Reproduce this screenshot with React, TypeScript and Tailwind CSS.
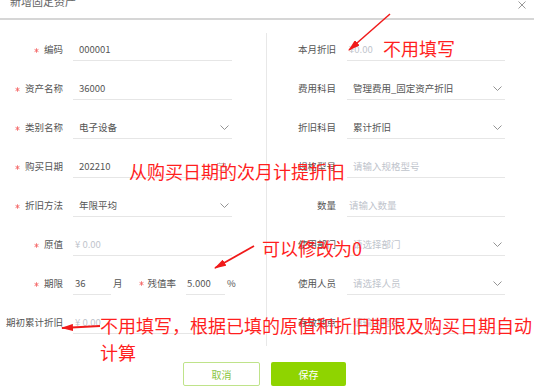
import React from 'react';

const Chevron = () => (
  <svg width="9" height="5" viewBox="0 0 9 5" className="shrink-0">
    <polyline points="0.5,0.5 4.5,4.5 8.5,0.5" fill="none" stroke="#888" strokeWidth="0.9" />
  </svg>
);

const Star = ({ className = 'mr-[5px]' }: { className?: string }) => (
  <svg width="5" height="5" viewBox="0 0 10 10" className={`inline-block align-middle ${className}`}>
    <path d="M5 0.5 V9.5 M1.1 2.75 L8.9 7.25 M8.9 2.75 L1.1 7.25" stroke="#f56c6c" strokeWidth="1.8" />
  </svg>
);

type RowProps = {
  label: string;
  req?: boolean;
  value?: string;
  placeholder?: string;
  select?: boolean;
  money?: boolean;
  right?: boolean;
  icon?: React.ReactNode;
};

const Row: React.FC<RowProps> = ({ label, req, value, placeholder, select, money, right, icon }) => (
  <div className="h-[39px] flex items-center">
    <div
      className={`${right ? 'w-[69px]' : 'w-[63px]'} text-right text-[9.5px] text-[#555] whitespace-nowrap`}
    >
      {req && <Star />}
      {label}
    </div>
    <div
      className={`${right ? 'ml-[11px] w-[158px]' : 'ml-[10px] w-[159px]'} h-[22px] border-b border-[#e6e6e6] flex items-center justify-between ${money ? 'pl-[2px]' : 'pl-[6px]'} pr-[3px] text-[9.5px]`}
    >
      {value ? (
        <span className="text-[#555]">{value}</span>
      ) : (
        <span className="text-[#c0c4cc]">{placeholder}</span>
      )}
      {select && <Chevron />}
      {icon}
    </div>
  </div>
);

const Calendar = () => (
  <svg width="9" height="9" viewBox="0 0 9 9" className="shrink-0 mr-[3px]">
    <rect x="0.5" y="1.5" width="8" height="7" fill="none" stroke="#bbb" strokeWidth="0.8" />
    <line x1="0.5" y1="3.5" x2="8.5" y2="3.5" stroke="#bbb" strokeWidth="0.8" />
    <line x1="2.5" y1="0.5" x2="2.5" y2="2" stroke="#bbb" strokeWidth="0.8" />
    <line x1="6.5" y1="0.5" x2="6.5" y2="2" stroke="#bbb" strokeWidth="0.8" />
  </svg>
);

export default function App() {
  return (
    <div className="relative w-[534px] h-[389px] overflow-hidden bg-white font-['Noto_Sans_CJK_SC',sans-serif]">
      <div className="h-[20px] border-b-2 border-[#d6d6d6] flex justify-between">
        <span className="ml-[10px] -mt-[4px] text-[11px] leading-[11px] text-[#666]">新增固定资产</span>
        <svg width="8" height="8" viewBox="0 0 8 8" className="mr-[8px] mt-[1px]">
          <path d="M0.5 0.5 L7.5 7.5 M7.5 0.5 L0.5 7.5" stroke="#999" strokeWidth="1" />
        </svg>
      </div>

      <div className="flex pt-[10px]">
        <div className="w-[266px]">
          <Row label="编码" req value="000001" />
          <Row label="资产名称" req value="36000" />
          <Row label="类别名称" req value="电子设备" select />
          <Row label="购买日期" req value="202210" icon={<Calendar />} />
          <Row label="折旧方法" req value="年限平均" select />
          <Row label="原值" req placeholder="¥ 0.00" money />
          <div className="h-[39px] flex items-center text-[9.5px] text-[#555]">
            <div className="w-[63px] text-right whitespace-nowrap">
              <Star />
              期限
            </div>
            <div className="ml-[10px] w-[38px] h-[22px] border-b border-[#e6e6e6] flex items-center pl-[2px]">36</div>
            <span className="ml-[2px]">月</span>
            <Star className="ml-[16px]" />
            <span className="ml-[4px]">残值率</span>
            <div className="ml-[10px] w-[39px] h-[22px] border-b border-[#e6e6e6] flex items-center pl-[1px]">5.000</div>
            <span className="ml-[2px]">%</span>
          </div>
          <Row label="期初累计折旧" placeholder="¥ 0.00" money />
        </div>
        <div className="w-px bg-[#e8e8e8] mt-[3px] mb-[-4px]" />
        <div className="w-[267px]">
          <Row right label="本月折旧" placeholder="¥0.00" money />
          <Row right label="费用科目" value="管理费用_固定资产折旧" select />
          <Row right label="折旧科目" value="累计折旧" select />
          <Row right label="规格型号" placeholder="请输入规格型号" />
          <Row right label="数量" placeholder="请输入数量" money />
          <Row right label="使用部门" placeholder="请选择部门" select />
          <Row right label="使用人员" placeholder="请选择人员" select />
          <Row right label="存放地点" placeholder="请输入地点" />
        </div>
      </div>

      <div className="flex justify-center gap-[11px] mt-[20px] pr-[5px]">
        <button className="w-[77px] h-[24px] rounded-[2px] border border-[#bfe38a] bg-white text-[#8cc63f] text-[10px]">
          取消
        </button>
        <button className="w-[75px] h-[24px] rounded-[2px] bg-[#8fd400] text-white text-[10px]">保存</button>
      </div>

      {/* 标注 */}
      <svg className="absolute inset-0 pointer-events-none" width="534" height="389">
        <defs>
          <marker id="ah" markerWidth="12" markerHeight="7" refX="11" refY="3.5" orient="auto" markerUnits="userSpaceOnUse">
            <polygon points="0,0 12,3.5 0,7" fill="#f01a1a" />
          </marker>
        </defs>
        <line x1="390" y1="14" x2="349" y2="50" stroke="#f01a1a" strokeWidth="1.5" markerEnd="url(#ah)" />
        <line x1="254" y1="246" x2="215" y2="268" stroke="#f01a1a" strokeWidth="1.8" markerEnd="url(#ah)" />
        <line x1="100" y1="326" x2="62" y2="328" stroke="#f01a1a" strokeWidth="1.8" markerEnd="url(#ah)" />
      </svg>
      <div className="absolute left-[383px] top-[39px] text-[18px] leading-[18px] text-[#ff1f1f] whitespace-nowrap">不用填写</div>
      <div className="absolute left-[129px] top-[162px] text-[18px] leading-[18px] text-[#ff1f1f] whitespace-nowrap">
        从购买日期的次月计提折旧
      </div>
      <div className="absolute left-[262px] top-[239px] text-[18px] leading-[18px] text-[#ff1f1f] whitespace-nowrap">
        可以修改为0
      </div>
      <div className="absolute left-[100px] top-[312px] text-[18px] leading-[27px] text-[#ff1f1f] whitespace-nowrap">
        不用填写，根据已填的原值和折旧期限及购买日期自动
        <br />
        计算
      </div>
    </div>
  );
}
